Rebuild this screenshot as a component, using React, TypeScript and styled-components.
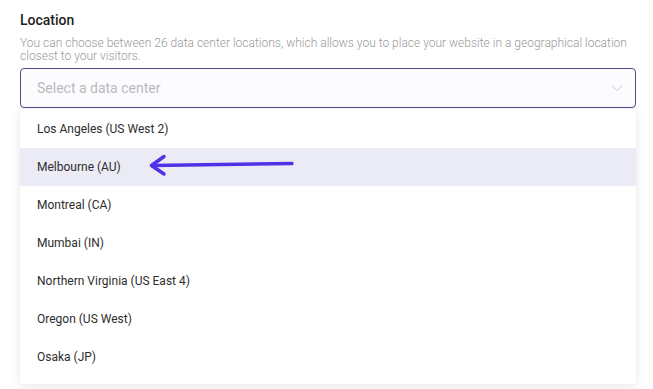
import React from 'react';
import styled, { createGlobalStyle } from 'styled-components';

const GlobalStyle = createGlobalStyle`
  * {
    box-sizing: border-box;
  }
  body {
    margin: 0;
    background: #ffffff;
    font-family: Roboto, 'Liberation Sans', sans-serif;
  }
`;

const Page = styled.div`
  width: 653px;
  height: 389px;
  padding: 11px 17px 0 20px;
  overflow: hidden;
`;

const Title = styled.h2`
  margin: 0;
  font-size: 14px;
  line-height: 18px;
  font-weight: 500;
  color: #1f1f1f;
`;

const Description = styled.p`
  margin: 8px 0 0;
  font-size: 12px;
  line-height: 13px;
  font-weight: 300;
  color: #9a9a9a;
`;

const SelectBox = styled.div`
  display: flex;
  align-items: center;
  justify-content: space-between;
  height: 40px;
  margin-top: 5px;
  padding: 0 12px 0 16px;
  background: #fcfcff;
  border: 1px solid #54488a;
  border-radius: 4px;
`;

const Placeholder = styled.span`
  font-size: 14px;
  color: #b9b9bc;
`;

const Menu = styled.ul`
  list-style: none;
  margin: 2px 0 0;
  padding: 0 0 8px;
  background: #ffffff;
  border-radius: 4px;
  box-shadow: 0 2px 12px rgba(0, 0, 0, 0.1);
`;

const Option = styled.li<{ $active?: boolean }>`
  position: relative;
  display: flex;
  align-items: center;
  height: 38px;
  padding-left: 17px;
  font-size: 12px;
  color: #2d2d2d;
  background: ${(p) => (p.$active ? '#ebebf5' : 'transparent')};
`;

const Pointer = styled.svg`
  position: absolute;
  left: 128px;
  top: 5px;
`;

const Chevron = () => (
  <svg width="12" height="8" viewBox="0 0 12 8" fill="none">
    <path d="M1 1.5 L6 6.5 L11 1.5" stroke="#c8c8cc" strokeWidth="1" />
  </svg>
);

const locations = [
  'Los Angeles (US West 2)',
  'Melbourne (AU)',
  'Montreal (CA)',
  'Mumbai (IN)',
  'Northern Virginia (US East 4)',
  'Oregon (US West)',
  'Osaka (JP)',
];

export default function App() {
  return (
    <>
      <GlobalStyle />
      <Page>
        <Title>Location</Title>
        <Description>
          You can choose between 26 data center locations, which allows you to place your website in a geographical location
          closest to your visitors.
        </Description>
        <SelectBox>
          <Placeholder>Select a data center</Placeholder>
          <Chevron />
        </SelectBox>
        <Menu>
          {locations.map((name) => (
            <Option key={name} $active={name === 'Melbourne (AU)'}>
              {name}
              {name === 'Melbourne (AU)' && (
                <Pointer width="150" height="24" viewBox="0 0 150 24" fill="none">
                  <path
                    d="M4 12.5 L144 10.5"
                    stroke="#5031e6"
                    strokeWidth="3.5"
                    strokeLinecap="round"
                  />
                  <path
                    d="M16 3.5 L3.5 12.5 L16 21"
                    stroke="#5031e6"
                    strokeWidth="3.5"
                    strokeLinecap="round"
                    strokeLinejoin="round"
                  />
                </Pointer>
              )}
            </Option>
          ))}
        </Menu>
      </Page>
    </>
  );
}
